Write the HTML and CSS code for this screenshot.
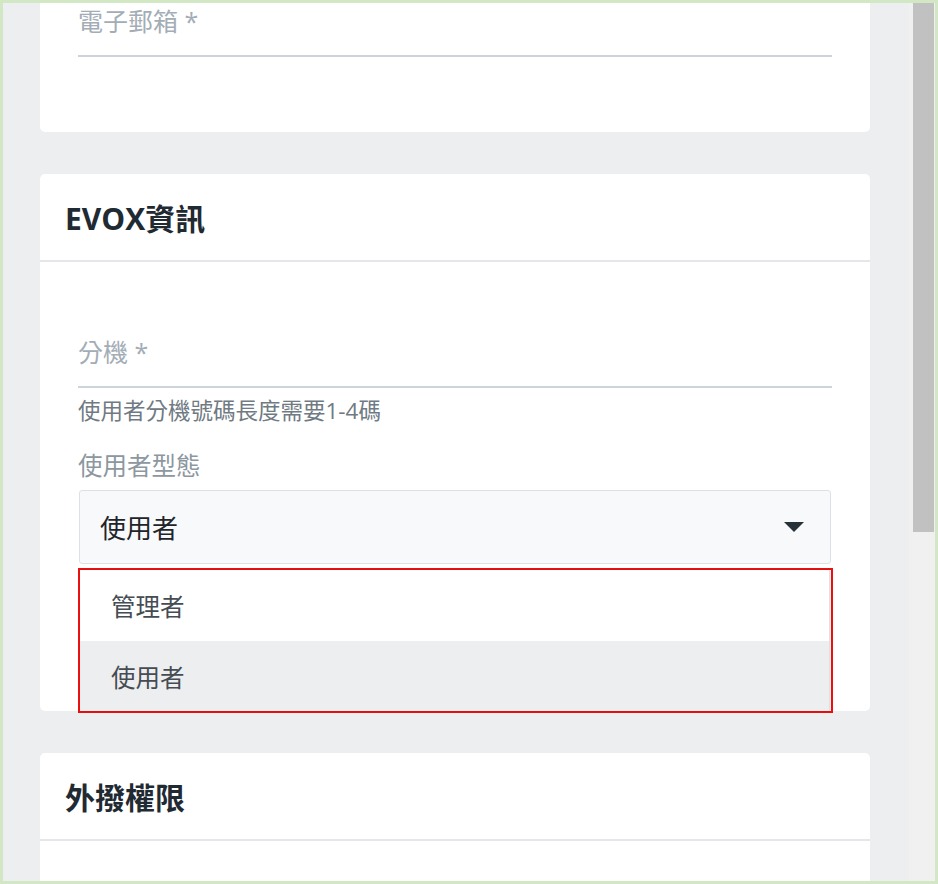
FILE: index.html
```html
<!DOCTYPE html>
<html lang="zh-Hant">
<head>
    <meta charset="UTF-8">
    <meta name="viewport" content="width=device-width, initial-scale=1.0">
    <title>使用者設定</title>
    <link rel="stylesheet" href="styles.css">
</head>
<body>
    <div class="frame">
        <!-- Scrolled page content -->
        <div class="page">
            <div class="card card-cut">
                <div class="card-body body-short">
                    <div class="field">
                        <span class="float-label">電子郵箱 *</span>
                    </div>
                </div>
            </div>

            <div class="card">
                <div class="card-header">EVOX資訊</div>
                <div class="card-body body-evox">
                    <div class="field">
                        <span class="float-label">分機 *</span>
                    </div>
                    <p class="hint">使用者分機號碼長度需要1-4碼</p>
                    <p class="label">使用者型態</p>
                    <div class="select-wrap">
                        <div class="select">
                            <span>使用者</span>
                            <svg class="caret" width="20" height="10" viewBox="0 0 20 10">
                                <path d="M0 0 H20 L10 10 Z" fill="#263238"/>
                            </svg>
                        </div>
                        <!-- Open dropdown, marked with a red frame -->
                        <div class="menu-mark">
                            <ul class="menu">
                                <li>管理者</li>
                                <li class="selected">使用者</li>
                            </ul>
                        </div>
                    </div>
                </div>
            </div>

            <div class="card">
                <div class="card-header">外撥權限</div>
                <div class="card-body body-tail"></div>
            </div>
        </div>

        <div class="scrollbar">
            <div class="thumb"></div>
        </div>
    </div>
</body>
</html>
```

FILE: styles.css
```css
* {
    margin: 0;
    padding: 0;
    box-sizing: border-box;
}

body {
    font-family: 'Open Sans', 'Noto Sans CJK TC', sans-serif;
    background-color: #edeef0;
    color: #212529;
}

.frame {
    display: flex;
    height: 884px;
    border: 3px solid #d2e7c4;
    background-color: #edeef0;
    overflow: hidden;
}

.page {
    flex: 1;
    display: flex;
    flex-direction: column;
    gap: 42px;
    padding: 0 39px 0 37px;
    overflow: hidden;
}

/* Cards */
.card {
    flex-shrink: 0;
    background: #ffffff;
    border-radius: 5px;
}

.card-cut {
    border-top-left-radius: 0;
    border-top-right-radius: 0;
}

.card-header {
    height: 88px;
    padding: 0 25px;
    display: flex;
    align-items: center;
    border-bottom: 2px solid #e4e6e9;
    font-size: 30px;
    font-weight: 700;
    color: #1f2a33;
}

.card-body {
    padding: 0 38px;
}

.body-short {
    padding-bottom: 75px;
}

.body-evox {
    padding-top: 72px;
    padding-bottom: 147px;
}

.body-tail {
    height: 120px;
}

/* Form fields */
.field {
    padding-bottom: 16px;
    border-bottom: 2px solid #ccd3da;
}

.float-label {
    display: block;
    line-height: 36px;
    font-size: 25px;
    color: #a3adb6;
}

.hint {
    margin-top: 8px;
    line-height: 30px;
    font-size: 22.5px;
    color: #707a83;
}

.label {
    margin-top: 24px;
    line-height: 32px;
    font-size: 24.5px;
    color: #8c979f;
}

.select-wrap {
    position: relative;
    margin-top: 8px;
    margin-left: 1px;
    margin-right: 1px;
}

.select {
    height: 74px;
    display: flex;
    align-items: center;
    justify-content: space-between;
    padding: 0 26px 0 20px;
    background: #f8f9fa;
    border: 1px solid #dde1e5;
    border-radius: 3px;
    font-size: 26px;
    color: #212529;
}

.caret {
    display: block;
}

/* Dropdown menu */
.menu-mark {
    position: absolute;
    top: 78px;
    left: -1px;
    width: 755px;
    height: 145px;
    border: 2px solid #ec1010;
    z-index: 10;
}

.menu {
    list-style: none;
    width: 749px;
    height: 141px;
    background: #ffffff;
    box-shadow: 1px 0 2px rgba(0, 0, 0, 0.18);
}

.menu li {
    height: 71px;
    display: flex;
    align-items: center;
    padding-left: 31px;
    font-size: 24.5px;
    color: #454c53;
}

.menu li.selected {
    height: 70px;
    background: #edeef0;
}

/* Fake scrollbar */
.scrollbar {
    width: 26px;
    flex-shrink: 0;
    background: #f0f0f1;
    padding-left: 4px;
}

.thumb {
    width: 21px;
    height: 529px;
    background: #c1c1c1;
}
```
